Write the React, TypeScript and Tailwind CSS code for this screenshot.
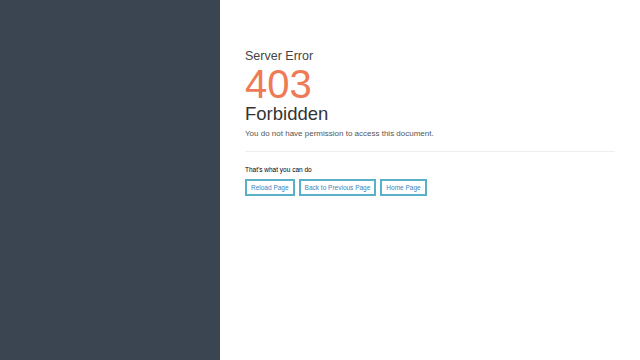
export default function App() {
  return (
    <div className="flex h-[360px] w-[640px] font-['Liberation_Sans',Arial,sans-serif]">
      <div className="w-[220px] shrink-0 bg-[#3a4551]" />
      <div className="flex-1 bg-white px-[25px] pt-[48px]">
        <div className="text-[12.5px] leading-[16px] text-[#444]">Server Error</div>
        <div className="text-[40px] leading-[40px] text-[#ee7a56]">403</div>
        <div className="text-[18.5px] leading-[20px] text-[#333]">Forbidden</div>
        <div className="mt-[4px] text-[8px] leading-[12px] text-[#555]">
          You do not have permission to access this document.
        </div>
        <div className="mt-[11px] h-px w-[370px] bg-[#eee]" />
        <div className="mt-[13px] text-[6.5px] leading-[9px] text-black">That&apos;s what you can do</div>
        <div className="mt-[5px] flex gap-[4px]">
          {['Reload Page', 'Back to Previous Page', 'Home Page'].map((t) => (
            <button
              key={t}
              className="h-[17px] border-2 border-[#5ab0c6] px-[4px] text-[6.5px] leading-[12px] text-[#3b86c2]"
            >
              {t}
            </button>
          ))}
        </div>
      </div>
    </div>
  )
}
